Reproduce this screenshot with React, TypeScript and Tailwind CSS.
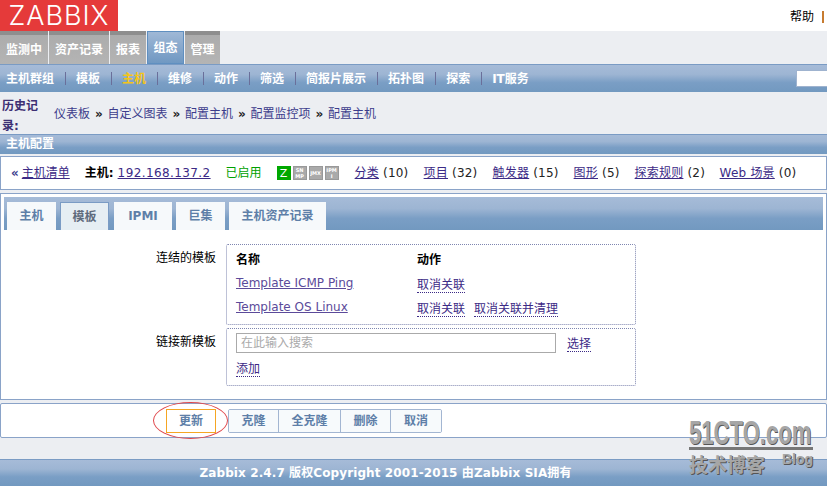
const band = "bg-[linear-gradient(to_bottom,#a6bbd8_0%,#9db5d3_35%,#7a9ec5_65%,#7299c0_100%)]"
const font = "font-['DejaVu_Sans','Noto_Sans_CJK_SC',sans-serif]"

const mainTabs = [
  { label: "监测中", width: "w-[48px]" },
  { label: "资产记录", width: "w-[60px]" },
  { label: "报表", width: "w-[36px]" },
  { label: "组态", width: "w-[37px]", active: true },
  { label: "管理", width: "w-[35px]" },
]

const subNav = [
  { label: "主机群组" },
  { label: "模板" },
  { label: "主机", active: true },
  { label: "维修" },
  { label: "动作" },
  { label: "筛选" },
  { label: "简报片展示" },
  { label: "拓扑图" },
  { label: "探索" },
]

const history = ["仪表板", "自定义图表", "配置主机", "配置监控项", "配置主机"]

const hostLinks = [
  { label: "分类", count: "(10)", width: "w-[69px]" },
  { label: "项目", count: "(32)", width: "w-[69px]" },
  { label: "触发器", count: "(15)", width: "w-[81px]" },
  { label: "图形", count: "(5)", width: "w-[61px]" },
  { label: "探索规则", count: "(2)", width: "w-[85px]" },
  { label: "Web 场景", count: "(0)", width: "w-[90px]" },
]

const formTabs = [
  { label: "主机", width: "w-[49px]", gap: "mr-[4px]" },
  { label: "模板", width: "w-[49px]", gap: "mr-[5px]", active: true },
  { label: "IPMI", width: "w-[58px]", gap: "mr-[4px]" },
  { label: "巨集", width: "w-[49px]", gap: "mr-[4px]" },
  { label: "主机资产记录", width: "w-[97px]", gap: "" },
]

const buttons = [
  { label: "克隆", width: "w-[50px]" },
  { label: "全克隆", width: "w-[62px]" },
  { label: "删除", width: "w-[50px]" },
  { label: "取消", width: "w-[50px]" },
]

const Dotted = ({ children }: { children: React.ReactNode }) => (
  <a className="border-b border-dotted border-[#3c2a86] leading-[15px] text-[#3c2a86]">{children}</a>
)

const Status = ({ text }: { text: string }) => (
  <span className="flex h-[14px] w-[14px] items-center justify-center overflow-hidden break-all border border-[#999] bg-[#aaa] text-center text-[5px] font-bold leading-[6px] text-white">
    {text}
  </span>
)

const App = () => {
  return (
    <div className={`relative h-[486px] w-[827px] overflow-hidden bg-[#eceef2] text-[12px] text-black ${font}`}>
      {/* logo row */}
      <div className="flex h-[31px] items-start justify-between bg-white">
        <div className="flex h-[31px] w-[118px] items-center justify-center bg-[#e53a3a] font-['Inter',sans-serif] text-[27px] font-light leading-[31px] tracking-[1px] text-white">
          ZABBIX
        </div>
        <div className="mr-[3px] mt-[8px] flex items-center">
          <span>帮助</span>
          <span className="ml-[8px] h-[12px] w-[2px] bg-[#c77b30]" />
        </div>
      </div>

      {/* main tabs */}
      <div className="flex h-[33px]">
        {mainTabs.map((tab) => (
          <div
            key={tab.label}
            className={`mr-px flex items-center justify-center font-bold text-white ${tab.width} ${
              tab.active
                ? "border border-[#5f8fc0] bg-[linear-gradient(to_bottom,#9fb8d6,#7098c2)]"
                : "border-t-[4px] border-[#8e8e8e] bg-[linear-gradient(to_bottom,#acacac,#b4b4b4)]"
            }`}
          >
            {tab.label}
          </div>
        ))}
      </div>

      {/* sub nav */}
      <div className={`flex h-[28px] items-center border-t border-[#7a9bc4] pl-[6px] font-bold text-white ${band}`}>
        {subNav.map((item) => (
          <div key={item.label} className="flex shrink-0 items-center">
            <span className={item.active ? "text-[#f5c518]" : ""}>{item.label}</span>
            <span className="ml-[11px] mr-[10px] h-[13px] w-px bg-[#6a6f9a]" />
          </div>
        ))}
        <span>IT服务</span>
        <div className="ml-auto h-[17px] w-[31px] border-b border-l border-t border-[#9fb3cf] bg-white" />
      </div>

      {/* history */}
      <div className="flex h-[42px] items-start pl-[2px] pt-[4px]">
        <div className="w-[40px] font-bold leading-[20px] text-[#3c2f73]">历史记录:</div>
        <div className="ml-[12px] mt-[9px] flex items-center text-[#3c3c8c]">
          {history.map((item, i) => (
            <span key={i} className="flex items-center">
              {i > 0 && <span className="mx-[5px] w-[7.5px] font-bold text-[#222]">»</span>}
              {item}
            </span>
          ))}
        </div>
      </div>

      {/* section title */}
      <div className={`h-[20px] border-t border-[#7a9bc4] pl-[6px] font-bold leading-[19px] text-white ${band}`}>
        主机配置
      </div>

      {/* host bar */}
      <div className="mt-[2px] flex h-[34px] items-center border border-[#8aa3c8] bg-white pl-[10px] text-[#222]">
        <span className="font-bold text-[#3c3c8c]">«</span>
        <a className="ml-[3px] text-[#3c2a86] underline">主机清单</a>
        <b className="ml-[15px] text-black">主机:</b>
        <a className="ml-[4px] w-[92px] tracking-[0.4px] text-[#3c2a86] underline">192.168.137.2</a>
        <span className="ml-[16px] text-[#00a000]">已启用</span>
        <div className="ml-[15px] flex gap-[2px]">
          <span className="flex h-[14px] w-[14px] items-center justify-center bg-[#00a800] text-[11px] leading-none text-white">
            Z
          </span>
          <Status text="SNMP" />
          <Status text="JMX" />
          <Status text="IPMI" />
        </div>
        <div className="ml-[16px] flex">
          {hostLinks.map((link) => (
            <span key={link.label} className={`flex shrink-0 gap-[4px] tracking-[0.2px] ${link.width}`}>
              <a className="text-[#3c2a86] underline">{link.label}</a>
              <span>{link.count}</span>
            </span>
          ))}
        </div>
      </div>

      {/* form panel */}
      <div className="mt-[3px] h-[207px] border border-[#8aa3c8] bg-white p-[3px]">
        <div className={`flex h-[33px] items-end pl-[3px] ${band}`}>
          {formTabs.map((tab) => (
            <div
              key={tab.label}
              className={`flex h-[28px] items-center justify-center font-bold text-[#5e7fa8] ${tab.width} ${tab.gap} ${
                tab.active
                  ? "border border-b-0 border-[#7a9bc4] bg-[#e6eef3] text-[#5f6b7c]"
                  : "bg-[#f6f9fb]"
              }`}
            >
              {tab.label}
            </div>
          ))}
        </div>

        <div className="flex pt-[14px]">
          <div className="w-[212px] pt-[5px] text-right text-black">连结的模板</div>
          <div className="ml-[10px] h-[81px] w-[410px] rounded-[2px] border border-dotted border-[#7f86b0] px-[9px] pt-[6px]">
            <div className="flex font-bold">
              <span className="w-[181px]">名称</span>
              <span>动作</span>
            </div>
            <div className="mt-[8px] flex h-[14px] items-center">
              <a className="mb-[2px] w-[181px] text-[#5b4a9a] underline">Template ICMP Ping</a>
              <span className="mt-[2px]">
                <Dotted>取消关联</Dotted>
              </span>
            </div>
            <div className="mt-[10px] flex h-[14px] items-center">
              <a className="mb-[2px] w-[181px] text-[#5b4a9a] underline">Template OS Linux</a>
              <span className="mt-[2px]">
                <Dotted>取消关联</Dotted>
              </span>
              <span className="ml-[9px] mt-[2px]">
                <Dotted>取消关联并清理</Dotted>
              </span>
            </div>
          </div>
        </div>

        <div className="mt-[3px] flex">
          <div className="w-[212px] pt-[5px] text-right text-black">链接新模板</div>
          <div className="ml-[10px] h-[58px] w-[410px] rounded-[2px] border border-dotted border-[#7f86b0] px-[9px] pt-[4px]">
            <div className="flex items-center">
              <div className="flex h-[20px] w-[320px] items-center border border-[#aaa] pl-[4px] text-[#aaa]">
                在此输入搜索
              </div>
              <span className="ml-[11px] mt-[1px]">
                <Dotted>选择</Dotted>
              </span>
            </div>
            <div className="mt-[7px]">
              <Dotted>添加</Dotted>
            </div>
          </div>
        </div>
      </div>

      {/* buttons */}
      <div className="mt-[3px] flex h-[35px] items-center rounded-[2px] border border-[#8aa3c8] bg-white pl-[165px]">
        <button className="h-[24px] w-[50px] border border-[#f5a623] bg-white font-bold text-[#5e7fa8]">更新</button>
        <div className="ml-[12px] flex overflow-hidden rounded-[2px] border border-[#a3b6d2]">
          {buttons.map((b) => (
            <button
              key={b.label}
              className={`h-[22px] border-r border-[#a3b6d2] bg-[#f7fafc] font-bold text-[#5e7fa8] last:border-r-0 ${b.width}`}
            >
              {b.label}
            </button>
          ))}
        </div>
      </div>

      {/* footer */}
      <div className={`mt-[21px] h-[27px] border-t border-[#7a9bc4] pr-[56px] pt-[4px] text-center font-bold tracking-[0.1px] text-white ${band}`}>
        Zabbix 2.4.7 版权Copyright 2001-2015 由Zabbix SIA拥有
      </div>

      {/* red ellipse annotation */}
      <div className="absolute left-[153px] top-[402px] h-[37px] w-[75px] rounded-[50%] border border-[#e0484c]" />

      {/* watermark */}
      <div className="absolute left-[689px] top-[417px] w-[124px] text-[#a6a6a6]">
        <div className="h-[30px] origin-left scale-x-[0.65] whitespace-nowrap font-['Liberation_Sans',sans-serif] text-[34px] font-bold leading-[30px] [text-shadow:1px_1px_0_#555]">
          51CTO.com
        </div>
        <div className="h-[3px] bg-[#777]" />
        <div className="mt-[2px] flex items-start justify-between">
          <span className="font-['Noto_Sans_CJK_SC',sans-serif] text-[19px] font-bold leading-[24px] [text-shadow:1px_1px_0_#555]">
            技术博客
          </span>
          <span className="font-['Liberation_Sans',sans-serif] text-[14px] font-bold leading-[14px] [text-shadow:1px_1px_0_#555]">
            Blog
          </span>
        </div>
      </div>
    </div>
  )
}

export default App
